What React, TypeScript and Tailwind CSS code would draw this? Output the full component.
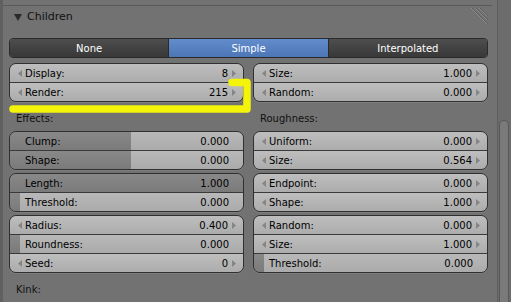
import React from "react";

type R = { l: string; v: string; arrows?: boolean; fill?: string };

function ArrowL() {
  return (
    <svg width="4" height="7" viewBox="0 0 4 7" className="shrink-0">
      <polygon points="4,0 0,3.5 4,7" fill="#858585" />
    </svg>
  );
}
function ArrowR() {
  return (
    <svg width="4" height="7" viewBox="0 0 4 7" className="shrink-0">
      <polygon points="0,0 4,3.5 0,7" fill="#858585" />
    </svg>
  );
}

function Row({ r }: { r: R }) {
  const style = r.fill
    ? {
        background: `linear-gradient(to bottom, rgba(255,255,255,0.06), rgba(0,0,0,0.05)), linear-gradient(to right, #818181 0 ${r.fill}, #b4b4b4 ${r.fill} 100%)`,
      }
    : undefined;
  if (r.arrows) {
    return (
      <div className="h-[18px] flex items-center pl-[8px] pr-[7px] bg-linear-to-b from-[#bebebe] to-[#acacac]">
        <ArrowL />
        <span className="flex-1 ml-[3px] pt-px">{r.l}</span>
        <span className="mr-[4px] pt-px">{r.v}</span>
        <ArrowR />
      </div>
    );
  }
  return (
    <div className="h-[18px] flex items-center pl-[15px] pr-[14px]" style={style}>
      <span className="flex-1 pt-px">{r.l}</span>
      <span className="pt-px">{r.v}</span>
    </div>
  );
}

function Block({ rows }: { rows: R[] }) {
  return (
    <div className="rounded-[7px] border border-[#303030] overflow-hidden flex flex-col shadow-[0_1px_0_rgba(255,255,255,0.08)]">
      {rows.map((r, i) => (
        <React.Fragment key={i}>
          {i > 0 && <div className="h-px bg-[#3a3a3a]" />}
          <Row r={r} />
        </React.Fragment>
      ))}
    </div>
  );
}

function SectionLabel({ text }: { text: string }) {
  return (
    <div className="h-[29px] flex items-end pb-[5px] pl-[7px]">
      <span className="leading-[14px] text-[#111]">{text}</span>
    </div>
  );
}

export default function App() {
  const left1: R[] = [
    { l: "Display:", v: "8", arrows: true },
    { l: "Render:", v: "215", arrows: true },
  ];
  const right1: R[] = [
    { l: "Size:", v: "1.000", arrows: true },
    { l: "Random:", v: "0.000", arrows: true },
  ];
  const left2: R[] = [
    { l: "Clump:", v: "0.000", fill: "121px" },
    { l: "Shape:", v: "0.000", fill: "121px" },
  ];
  const left3: R[] = [
    { l: "Length:", v: "1.000", fill: "100%" },
    { l: "Threshold:", v: "0.000", fill: "10px" },
  ];
  const left4: R[] = [
    { l: "Radius:", v: "0.400", arrows: true },
    { l: "Roundness:", v: "0.000", fill: "10px" },
    { l: "Seed:", v: "0", arrows: true },
  ];
  const right2: R[] = [
    { l: "Uniform:", v: "0.000", arrows: true },
    { l: "Size:", v: "0.564", arrows: true },
  ];
  const right3: R[] = [
    { l: "Endpoint:", v: "0.000", arrows: true },
    { l: "Shape:", v: "1.000", arrows: true },
  ];
  const right4: R[] = [
    { l: "Random:", v: "0.000", arrows: true },
    { l: "Size:", v: "1.000", arrows: true },
    { l: "Threshold:", v: "0.000", fill: "10px" },
  ];

  return (
    <div className="relative w-[511px] h-[302px] overflow-hidden bg-[#727272] flex font-['DejaVu_Sans',sans-serif] text-[10px] text-black">
      <div className="w-[3px] shrink-0 bg-[#606060]" />
      <div className="flex-1 flex flex-col min-w-0">
        <div className="h-[5px] shrink-0" />
        <div className="h-px shrink-0 bg-[#5a5a5a] mr-[5px]" />
        {/* header */}
        <div className="h-[23px] shrink-0 flex items-start pl-[11px] pr-[9px]">
          <div className="flex items-center gap-[5px] h-[23px]">
            <svg width="8" height="7" viewBox="0 0 8 7">
              <polygon points="0,0 8,0 4,7" fill="#2a2a2a" />
            </svg>
            <span className="text-[11px] text-[#111]">Children</span>
          </div>
          <svg width="17" height="17" viewBox="0 0 17 17" className="ml-auto mt-[2px]">
            <line x1="0" y1="0" x2="16" y2="16" stroke="#8c8c8c" strokeWidth="1" />
            <line x1="1" y1="0" x2="17" y2="16" stroke="#5c5c5c" strokeWidth="1" />
            <line x1="4" y1="0" x2="16" y2="12" stroke="#8c8c8c" strokeWidth="1" />
            <line x1="5" y1="0" x2="17" y2="12" stroke="#5c5c5c" strokeWidth="1" />
            <line x1="8" y1="0" x2="16" y2="8" stroke="#8c8c8c" strokeWidth="1" />
            <line x1="9" y1="0" x2="17" y2="8" stroke="#5c5c5c" strokeWidth="1" />
          </svg>
        </div>
        <div className="pl-[6px] pr-[9px] flex flex-col">
          {/* toggle */}
          <div className="mt-[9px] h-[20px] flex rounded-[4px] border border-[#2a2a2a] overflow-hidden text-white text-[10px]">
            <div className="flex-1 flex items-center justify-center bg-linear-to-b from-[#4e4e4e] to-[#383838]">None</div>
            <div className="flex-1 flex items-center justify-center bg-linear-to-b from-[#628ccc] to-[#4d76b6] border-x border-[#2a2a2a]">Simple</div>
            <div className="flex-1 flex items-center justify-center bg-linear-to-b from-[#4e4e4e] to-[#383838]">Interpolated</div>
          </div>
          <div className="mt-[5px] flex gap-[9px]">
            <div className="flex-1 flex flex-col">
              <Block rows={left1} />
              <SectionLabel text="Effects:" />
              <Block rows={left2} />
              <div className="h-[3px]" />
              <Block rows={left3} />
              <div className="h-[3px]" />
              <Block rows={left4} />
              <div className="mt-[10px] pl-[7px] leading-[14px] text-[#111]">Kink:</div>
            </div>
            <div className="flex-1 flex flex-col">
              <Block rows={right1} />
              <SectionLabel text="Roughness:" />
              <Block rows={right2} />
              <div className="h-[3px]" />
              <Block rows={right3} />
              <div className="h-[3px]" />
              <Block rows={right4} />
            </div>
          </div>
        </div>
      </div>
      {/* scrollbar */}
      <div className="w-[14px] shrink-0 border-l border-[#5e5e5e] bg-[#6c6c6c] flex flex-col">
        <div className="h-[120px] shrink-0" />
        <div className="flex-1 ml-px w-[10px] rounded-t-[5px] border border-b-0 border-[#585858] bg-[#7a7a7a]" />
      </div>
      {/* annotation overlay */}
      <svg className="absolute inset-0 pointer-events-none" width="511" height="302" viewBox="0 0 511 302">
        <path d="M13 109 L247 109 L247 82.5 L232 82.5" fill="none" stroke="#f4f40a" strokeWidth="7.5" strokeLinecap="round" strokeLinejoin="round" />
      </svg>
    </div>
  );
}
